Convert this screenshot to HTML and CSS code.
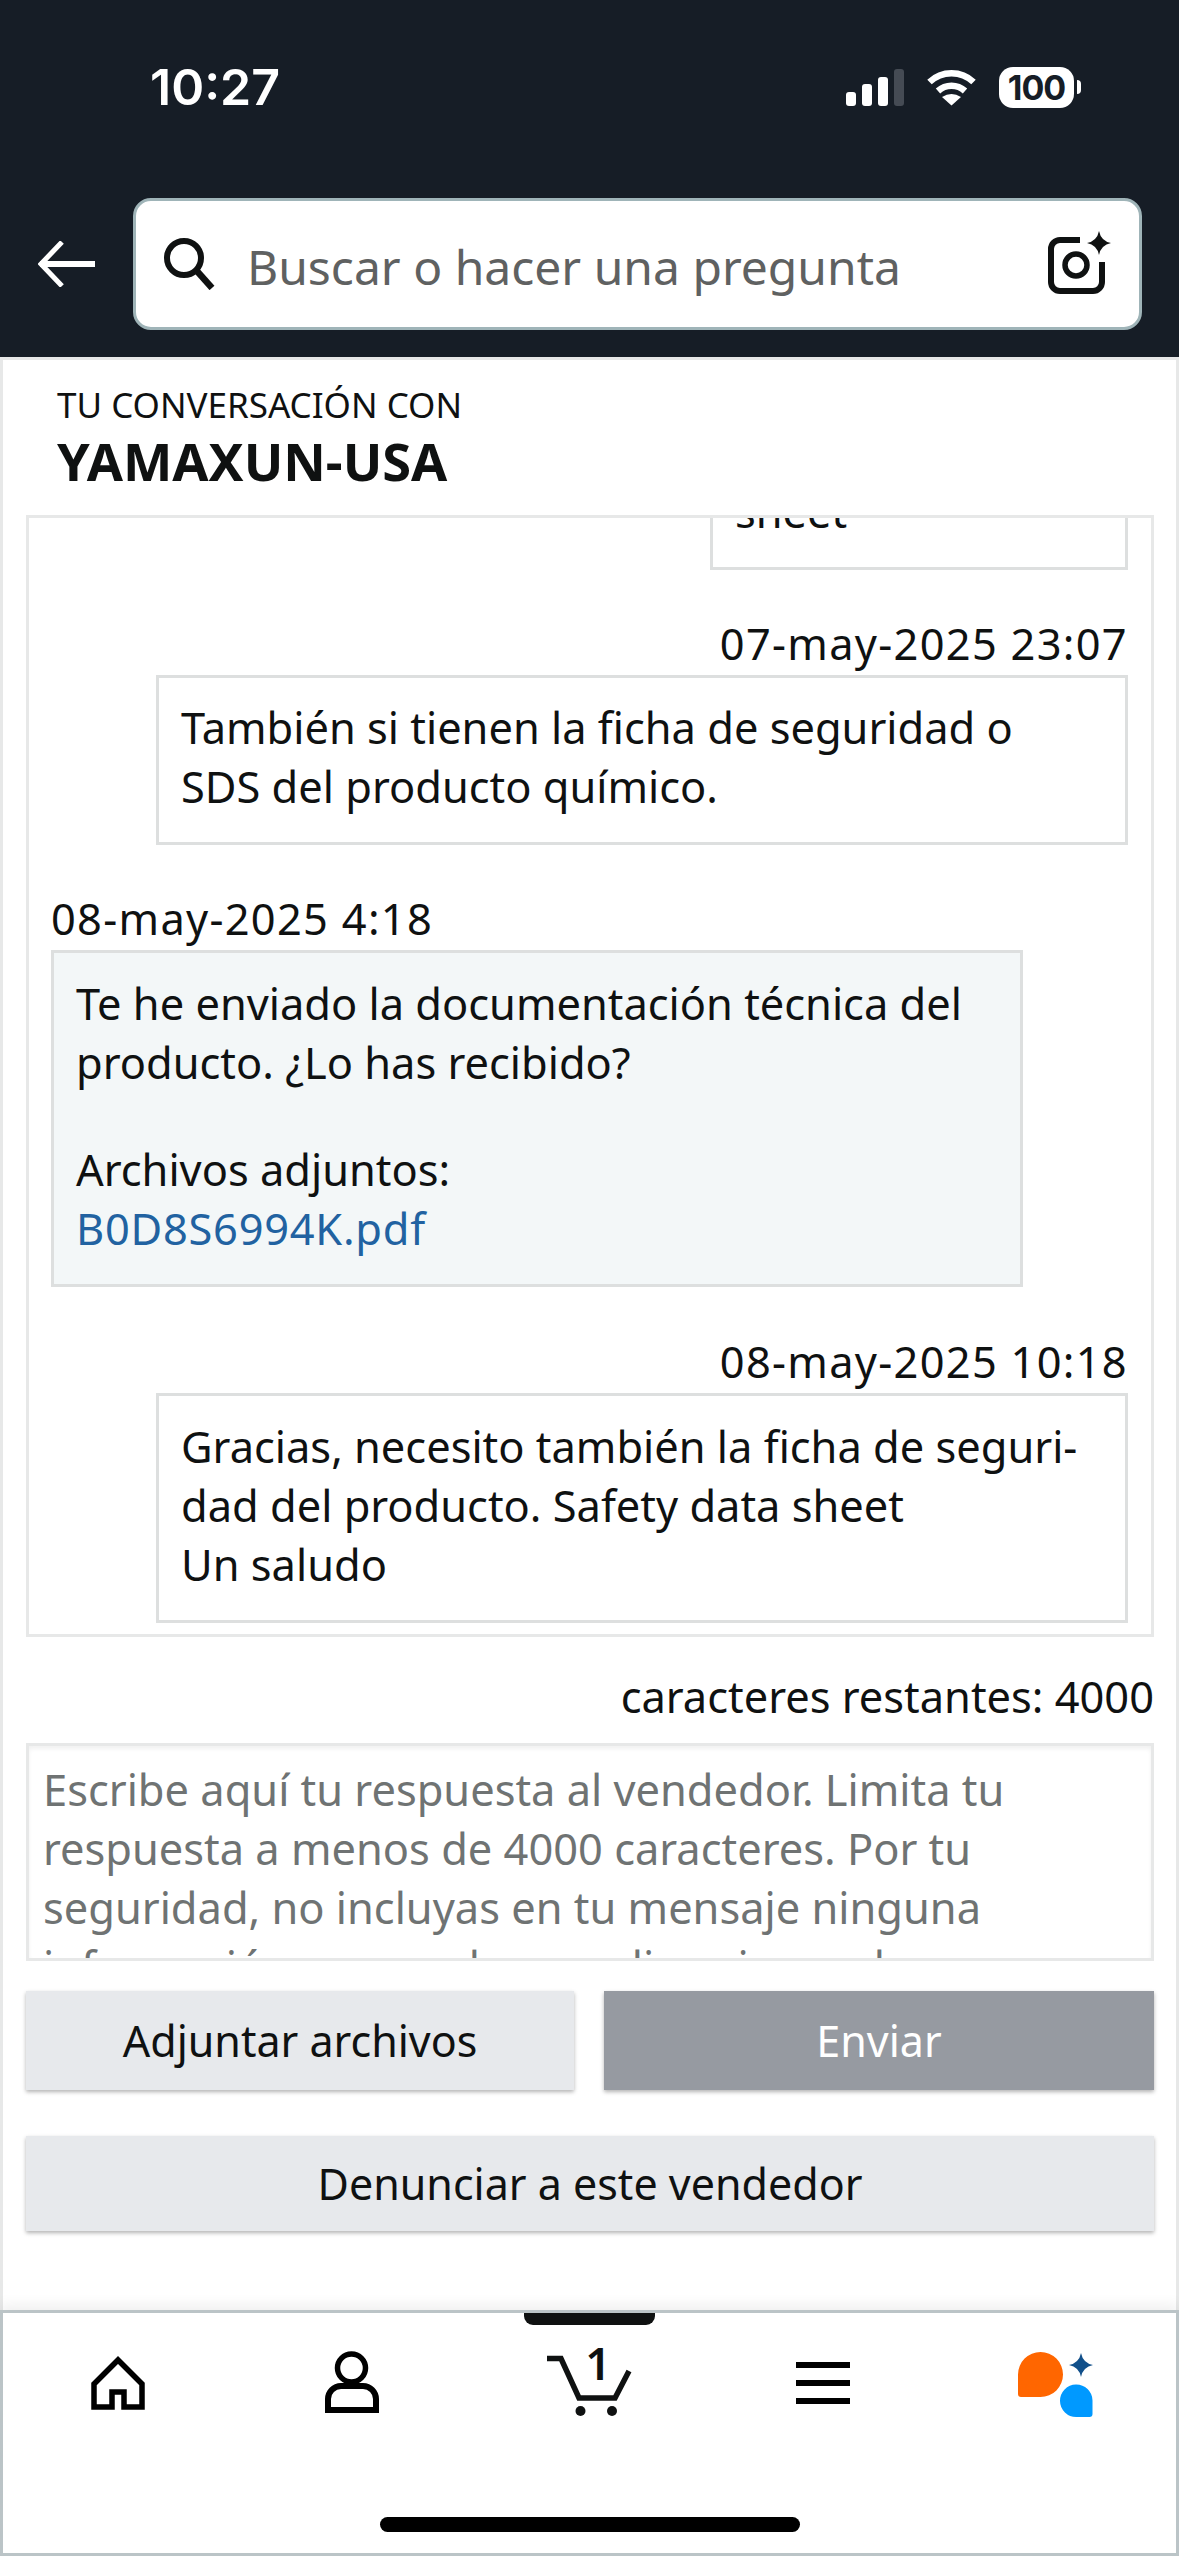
FILE: index.html
```html
<!DOCTYPE html>
<html lang="es">
<head>
  <meta charset="UTF-8">
  <meta name="viewport" content="width=device-width, initial-scale=1.0">
  <title>Tu conversación con YAMAXUN-USA</title>
  <link rel="stylesheet" href="styles.css">
</head>
<body>
<div class="page">

  <header class="top">
    <div class="status-bar">
      <span class="clock">10:27</span>
      <div class="status-icons">
        <svg width="58" height="37" viewBox="0 0 58 37">
          <rect x="0" y="23" width="10" height="14" rx="3" fill="#fff"/>
          <rect x="16" y="15" width="10" height="22" rx="3" fill="#fff"/>
          <rect x="32" y="8" width="10" height="29" rx="3" fill="#fff"/>
          <rect x="48" y="0" width="10" height="37" rx="3" fill="#454b54"/>
        </svg>
        <svg width="51" height="37" viewBox="0 0 51 37">
          <path d="M3.5 13A32 32 0 0 1 47.5 13" fill="none" stroke="#fff" stroke-width="6.5"/>
          <path d="M12 22A20 20 0 0 1 39 22" fill="none" stroke="#fff" stroke-width="6.5"/>
          <path d="M25.5 36.5L16 28Q25.5 22 35 28Z" fill="#fff"/>
        </svg>
        <span class="battery">100</span>
      </div>
    </div>
    <div class="search-row">
      <svg class="back" width="57" height="46" viewBox="0 0 57 46">
        <path d="M2 23H57" stroke="#fff" stroke-width="6" fill="none"/>
        <path d="M24 1L3 23L24 45" stroke="#fff" stroke-width="5" fill="none"/>
      </svg>
      <div class="search-box">
        <svg width="52" height="52" viewBox="0 0 52 52">
          <circle cx="20" cy="20" r="17" fill="none" stroke="#0f1111" stroke-width="6"/>
          <path d="M32 32L48 50" stroke="#0f1111" stroke-width="6.5" fill="none"/>
        </svg>
        <span class="search-text">Buscar o hacer una pregunta</span>
        <svg width="70" height="70" viewBox="0 0 70 70">
          <path d="M34 11H14a9 9 0 0 0-9 9V53a9 9 0 0 0 9 9H47a9 9 0 0 0 9-9V33" fill="none" stroke="#0f1111" stroke-width="6"/>
          <circle cx="30" cy="36" r="11" fill="none" stroke="#0f1111" stroke-width="5.5"/>
          <path d="M53 2Q55 12 65 14Q55 16 53 26Q51 16 41 14Q51 12 53 2Z" fill="#0f1111"/>
        </svg>
      </div>
    </div>
  </header>

  <main class="content">
    <div class="convo-head">
      <div class="convo-label">TU CONVERSACIÓN CON</div>
      <div class="convo-seller">YAMAXUN-USA</div>
    </div>

    <div class="messages">
      <div class="msg mine short">
        <div class="bubble">sheet</div>
      </div>
      <div class="msg mine second">
        <div class="msg-time">07-may-2025 23:07</div>
        <div class="bubble">También si tienen la ficha de seguridad o<br>SDS del producto químico.</div>
      </div>
      <div class="msg theirs">
        <div class="msg-time">08-may-2025 4:18</div>
        <div class="bubble">
          <div>Te he enviado la documentación técnica del<br>producto. ¿Lo has recibido?</div>
          <div class="attach-label">Archivos adjuntos:</div>
          <div><a class="attach-link" href="#">B0D8S6994K.pdf</a></div>
        </div>
      </div>
      <div class="msg mine last">
        <div class="msg-time">08-may-2025 10:18</div>
        <div class="bubble">Gracias, necesito también la ficha de seguri-<br>dad del producto. Safety data sheet<br>Un saludo</div>
      </div>
    </div>

    <div class="char-count">caracteres restantes: 4000</div>
    <div class="reply-box">Escribe aquí tu respuesta al vendedor. Limita tu respuesta a menos de 4000 caracteres. Por tu seguridad, no incluyas en tu mensaje ninguna información personal como direcciones de</div>

    <div class="btn-row">
      <button class="btn">Adjuntar archivos</button>
      <button class="btn btn-disabled">Enviar</button>
    </div>
    <button class="btn btn-wide">Denunciar a este vendedor</button>
  </main>

  <nav class="bottom-nav">
    <div class="nav-handle"></div>
    <div class="nav-icons">
      <svg width="100" height="76" viewBox="0 0 100 76">
        <path d="M24 39L48 15L72 39V62H54V47H42V62H24Z" fill="none" stroke="#000" stroke-width="5.5"/>
      </svg>
      <svg width="100" height="76" viewBox="0 0 100 76">
        <circle cx="46.5" cy="23" r="14" fill="none" stroke="#000" stroke-width="5.5"/>
        <path d="M23 65V54a13 13 0 0 1 13-13H58a13 13 0 0 1 13 13V65Z" fill="none" stroke="#000" stroke-width="6"/>
      </svg>
      <svg width="100" height="76" viewBox="0 0 100 76">
        <path d="M8 13.5H22L40 53H76L90 26" fill="none" stroke="#0f1111" stroke-width="5.5"/>
        <circle cx="41.5" cy="66" r="5" fill="#0f1111"/>
        <circle cx="73" cy="66" r="5" fill="#0f1111"/>
        <text class="cart-count" x="59" y="35" text-anchor="middle">1</text>
      </svg>
      <svg width="100" height="76" viewBox="0 0 100 76">
        <rect x="22" y="17" width="54" height="6"/>
        <rect x="22" y="35" width="54" height="6"/>
        <rect x="22" y="53" width="54" height="6"/>
      </svg>
      <svg width="100" height="76" viewBox="0 0 100 76">
        <path d="M9 29.5a22.5 22.5 0 0 1 45 0a22.5 22.5 0 0 1-22.5 22.5H12a3 3 0 0 1-3-3Z" fill="#ff6600"/>
        <path d="M83.5 55.5V69a3 3 0 0 1-3 3H67.5a16.25 16.25 0 1 1 16-16.5Z" fill="#0099ff"/>
        <path d="M72 8Q74 18 84 20Q74 22 72 32Q70 22 60 20Q70 18 72 8Z" fill="#12508a"/>
      </svg>
    </div>
    <div class="home-bar"></div>
  </nav>

</div>
</body>
</html>
```

FILE: styles.css
```css
* {
  box-sizing: border-box;
}

body {
  margin: 0;
  font-family: "Noto Sans", Arial, sans-serif;
  color: #0f1111;
  background-color: #fff;
}

.page {
  width: 1179px;
  height: 2556px;
  display: flex;
  flex-direction: column;
  overflow: hidden;
}

/* top bar */
.top {
  height: 357px;
  padding-top: 60px;
  background-color: #161d26;
}

.status-bar {
  height: 54px;
  padding: 0 98px 0 150px;
  display: flex;
  align-items: center;
  justify-content: space-between;
}

.clock {
  font-family: Inter, sans-serif;
  font-size: 50px;
  font-weight: 600;
  color: #fff;
}

.status-icons {
  display: flex;
  align-items: center;
  gap: 22px;
}

.battery {
  width: 75px;
  height: 41px;
  margin-right: 7px;
  border-radius: 14px;
  background-color: #fff;
  color: #161d26;
  font-family: Inter, sans-serif;
  font-size: 34px;
  font-weight: 700;
  letter-spacing: -1px;
  line-height: 41px;
  text-align: center;
  position: relative;
}

.battery::after {
  content: "";
  position: absolute;
  right: -7px;
  top: 13px;
  width: 4px;
  height: 14px;
  border-radius: 0 6px 6px 0;
  background-color: #fff;
}

.search-row {
  margin-top: 84px;
  padding: 0 37px 0 38px;
  display: flex;
  align-items: center;
  gap: 38px;
}

.search-box {
  flex: 1;
  height: 132px;
  padding: 0 23px 0 28px;
  display: flex;
  align-items: center;
  gap: 31px;
  background-color: #fff;
  border: 3px solid #9fb4b8;
  border-radius: 18px;
}

.search-text {
  flex: 1;
  padding-top: 4px;
  font-size: 48px;
  color: #5f6161;
}

/* conversation */
.content {
  flex: 1;
  padding: 0 22px 0 23px;
  border: 3px solid #e7e8e8;
  border-bottom: none;
  display: flex;
  flex-direction: column;
}

.convo-head {
  height: 155px;
  padding: 23px 0 0 31px;
}

.convo-label {
  font-size: 35px;
  line-height: 44px;
}

.convo-seller {
  font-size: 52.4px;
  font-weight: 700;
  line-height: 68px;
}

.messages {
  height: 1122px;
  padding: 0 23px 11px 22px;
  border: 3px solid #e7e8e8;
  display: flex;
  flex-direction: column;
  justify-content: flex-end;
  overflow: hidden;
  flex-shrink: 0;
}

.msg {
  margin-top: 46px;
  flex-shrink: 0;
  width: 972px;
}

.msg.mine {
  align-self: flex-end;
}

.msg.second {
  margin-top: 44px;
}

.msg.theirs {
  margin-top: 44px;
  align-self: flex-start;
}

.msg.last {
  margin-top: 45px;
}

.msg.short {
  width: 418px;
}

.msg-time {
  padding-bottom: 1px;
  font-size: 43.4px;
  letter-spacing: 1.3px;
  line-height: 60px;
}

.msg.mine .msg-time {
  text-align: right;
}

.bubble {
  padding: 20px 22px 26px;
  border: 3px solid #dddfdf;
  font-size: 43.4px;
  line-height: 59px;
}

.msg.theirs .bubble {
  padding-top: 21px;
  background-color: #f3f7f8;
}

.msg.last .bubble {
  padding-top: 21px;
}

.attach-label {
  margin-top: 48px;
}

.attach-link {
  color: #2162a1;
  letter-spacing: 0.75px;
  text-decoration: none;
}

/* reply form */
.char-count {
  margin-top: 30px;
  font-size: 43.4px;
  line-height: 59px;
  text-align: right;
}

.reply-box {
  height: 218px;
  margin-top: 17px;
  padding: 14px 14px 0;
  border: 3px solid #e7e8e8;
  box-shadow: inset 0 3px 4px rgba(0, 0, 0, 0.06);
  color: #6f7373;
  font-size: 43.4px;
  line-height: 59px;
  overflow: hidden;
}

.btn-row {
  margin-top: 30px;
  display: grid;
  grid-template-columns: 548px 550px;
  gap: 30px;
}

.btn {
  height: 99px;
  border: none;
  background-color: #e7e9ec;
  box-shadow: 0 2px 4px rgba(0, 0, 0, 0.3);
  color: #0f1111;
  font-family: inherit;
  font-size: 43px;
}

.btn-disabled {
  background-color: #969aa1;
  color: #fff;
}

.btn-wide {
  width: 100%;
  height: 95px;
  margin-top: 46px;
}

/* bottom nav */
.bottom-nav {
  height: 246px;
  position: relative;
  padding-top: 32px;
  background-color: #fff;
  border: 3px solid #bbc4c7;
  box-shadow: 0 -6px 12px rgba(0, 0, 0, 0.06);
  flex-shrink: 0;
}

.nav-handle {
  position: absolute;
  top: 0;
  left: 521px;
  width: 131px;
  height: 12px;
  background-color: #0f1111;
  border-radius: 0 0 9px 9px;
}

.nav-icons {
  display: grid;
  grid-template-columns: repeat(5, 1fr);
  justify-items: center;
}

.cart-count {
  font-family: "Noto Sans", sans-serif;
  font-size: 45px;
  font-weight: 600;
  fill: #0f1111;
}

.home-bar {
  width: 420px;
  height: 15px;
  margin: 96px auto 0;
  border-radius: 8px;
  background-color: #000;
}
```
